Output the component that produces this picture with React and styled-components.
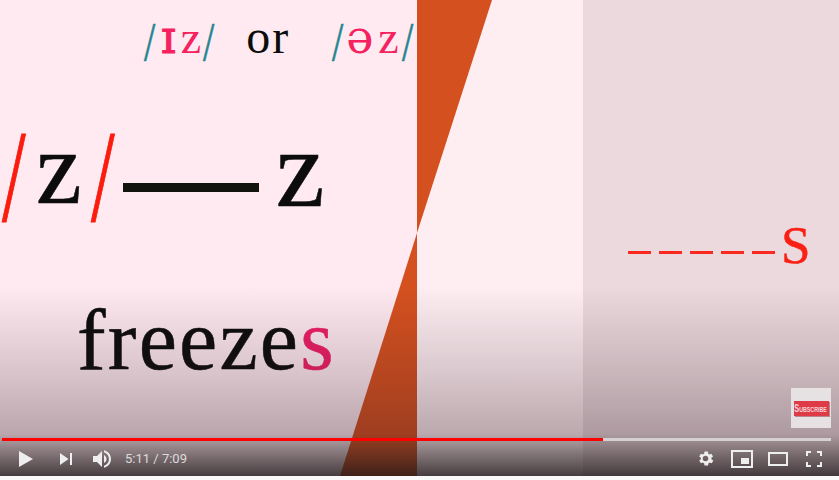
import styled, { createGlobalStyle } from "styled-components";

const Global = createGlobalStyle`
  html, body { margin: 0; padding: 0; background: #f9f9f9; overflow: hidden; }
`;

const Player = styled.div`
  position: relative;
  width: 839px;
  height: 476px;
  display: grid;
  grid-template-columns: 417px 166px 256px;
  overflow: hidden;
  font-family: "Liberation Serif", serif;
`;

const LeftPane = styled.div`
  background: #feeaf0;
  display: flex;
  flex-direction: column;
`;

const MiddlePane = styled.div`
  background: #feeef2;
`;

const RightPane = styled.div`
  background: #ebd9de;
  padding: 217px 0 0 45px;
`;

const Wedge = styled.svg`
  position: absolute;
  left: 0;
  top: 0;
`;

const Shade = styled.div`
  position: absolute;
  left: 0;
  right: 0;
  bottom: 0;
  height: 190px;
  background: linear-gradient(to bottom, rgba(48, 26, 34, 0) 0%, rgba(48, 26, 34, 0.2) 50%, rgba(48, 26, 34, 0.33) 78%, rgba(40, 30, 32, 0.55) 87%, rgba(30, 22, 24, 0.82) 100%);
`;

const IpaRow = styled.div`
  height: 85px;
  padding: 0 0 0 144px;
  font-size: 46px;
  line-height: 74px;
  white-space: nowrap;
`;

const Slash = styled.span`
  display: inline-block;
  font-size: ${(p) => p.$size}px;
  line-height: 1;
  color: ${(p) => p.$color};
  -webkit-text-stroke: ${(p) => p.$stroke}px ${(p) => p.$color};
  vertical-align: ${(p) => p.$drop}px;
  transform: scaleX(${(p) => p.$squeeze});
  transform-origin: left center;
  margin-left: ${(p) => p.$left || 0}px;
  width: ${(p) => p.$w}px;
`;

const IpaSound = styled.span`
  display: inline-block;
  color: #f5225f;
  font-family: ${(p) => (p.$phonetic ? '"DejaVu Serif", serif' : '"Liberation Serif", serif')};
  -webkit-text-stroke: ${(p) => p.$stroke || 0}px #f5225f;
  font-size: ${(p) => p.$size || 46}px;
  margin-left: ${(p) => p.$left || 0}px;
`;

const OrWord = styled.span`
  display: inline-block;
  color: #0c0c0c;
  font-size: 48px;
  letter-spacing: 2px;
  margin-left: ${(p) => p.$left}px;
`;

const RuleRow = styled.div`
  height: 160px;
  padding-left: 2px;
  font-size: 115px;
  line-height: 160px;
  color: #0c0c0c;
  white-space: nowrap;
`;

const Letter = styled.span`
  display: inline-block;
  font-size: ${(p) => p.$size}px;
  -webkit-text-stroke: 0.6px #0c0c0c;
  vertical-align: ${(p) => p.$drop || 0}px;
  margin-left: ${(p) => p.$left || 0}px;
`;

const RuleBar = styled.span`
  display: inline-block;
  width: 136px;
  height: 9px;
  margin-left: ${(p) => p.$left}px;
  background: #12130d;
  vertical-align: 11px;
`;

const Word = styled.div`
  margin-top: 45px;
  padding-left: 77px;
  font-size: 86px;
  letter-spacing: 2.2px;
  line-height: 100px;
  color: #0c0c0c;
  -webkit-text-stroke: 0.5px currentColor;
`;

const EndLetter = styled.span`
  color: #ee1e66;
`;

const DashedS = styled.div`
  display: flex;
  align-items: center;
  height: 70px;
`;

const Dash = styled.span`
  display: block;
  width: 23px;
  height: 3px;
  margin-right: 8px;
  background: #fb2a20;
`;

const BigS = styled.span`
  font-size: 53px;
  line-height: 70px;
  color: #fb2015;
  -webkit-text-stroke: 0.5px #fb2015;
  margin: 0 0 15px -2px;
`;

const SubscribeBox = styled.div`
  position: absolute;
  left: 791px;
  top: 388px;
  width: 40px;
  height: 40px;
  background: #e6e2e4;
  display: flex;
  align-items: center;
  justify-content: center;
`;

const SubscribeLabel = styled.span`
  display: flex;
  align-items: center;
  justify-content: center;
  width: 35px;
  height: 15px;
  background: #df3b47;
  box-shadow: 1px 1px 0 #b8868c;
  overflow: hidden;
`;

const SubscribeText = styled.span`
  display: inline-block;
  color: #f6d5d8;
  font-family: "Liberation Sans", sans-serif;
  font-size: 8px;
  font-weight: 700;
  white-space: nowrap;
  transform: scaleX(0.66);
  &::first-letter {
    font-size: 11px;
  }
`;

const Controls = styled.div`
  position: absolute;
  left: 2px;
  right: 8px;
  bottom: 0;
  height: 38px;
  display: flex;
  flex-direction: column;
`;

const Track = styled.div`
  height: 3px;
  background: #d5d1d2;
`;

const Played = styled.div`
  height: 3px;
  background: #fe0000;
`;

const ButtonRow = styled.div`
  flex: 1;
  display: flex;
  align-items: center;
  padding: 0 9px 0 16px;
  color: #eee;
`;

const Button = styled.span`
  display: flex;
  align-items: center;
  justify-content: center;
  width: ${(p) => p.$w}px;
  margin-right: ${(p) => p.$gap || 0}px;
  svg {
    flex-shrink: 0;
  }
`;

const Time = styled.span`
  font-family: Roboto, "Liberation Sans", sans-serif;
  font-size: 13px;
  color: #dcdcdc;
  margin-left: 13px;
`;

const Spacer = styled.div`
  flex: 1;
`;

const progress = (311 / 429) * 100;
const teal = "#1f8690";
const red = "#fb1c0e";

export default function App() {
  return (
    <>
      <Global />
      <Player>
        <LeftPane>
          <IpaRow>
            <Slash $size={54} $color={teal} $stroke={0.6} $drop={-7} $squeeze={0.75} $w={15}>/</Slash>
            <IpaSound $phonetic $stroke={1} $size={46} $left={2}>ɪ</IpaSound>
            <IpaSound $left={5}>z</IpaSound>
            <Slash $size={54} $color={teal} $stroke={0.6} $drop={-7} $squeeze={0.75} $w={15} $left={2}>/</Slash>
            <OrWord $left={28}>or</OrWord>
            <Slash $size={54} $color={teal} $stroke={0.6} $drop={-7} $squeeze={0.75} $w={13} $left={42}>/</Slash>
            <IpaSound $phonetic $size={46} $left={1}>ə</IpaSound>
            <IpaSound $left={5}>z</IpaSound>
            <Slash $size={54} $color={teal} $stroke={0.6} $drop={-7} $squeeze={0.75} $w={15} $left={3}>/</Slash>
          </IpaRow>
          <RuleRow>
            <Slash $size={131} $color={red} $stroke={1} $drop={-18} $squeeze={0.65} $w={24}>/</Slash>
            <Letter $size={103} $left={10}>z</Letter>
            <Slash $size={131} $color={red} $stroke={1} $drop={-18} $squeeze={0.65} $w={24} $left={9}>/</Slash>
            <RuleBar $left={8} />
            <Letter $size={110} $left={17} $drop={-3}>z</Letter>
          </RuleRow>
          <Word>
            freeze<EndLetter>s</EndLetter>
          </Word>
        </LeftPane>
        <MiddlePane />
        <RightPane>
          <DashedS>
            <Dash />
            <Dash />
            <Dash />
            <Dash />
            <Dash />
            <BigS>S</BigS>
          </DashedS>
        </RightPane>
        <Wedge width="839" height="476" viewBox="0 0 839 476">
          <polygon points="417,0 492,0 417,233" fill="#d5501f" />
          <polygon points="417,233 417,476 340,476" fill="#d5501f" />
        </Wedge>
        <Shade />
        <SubscribeBox>
          <SubscribeLabel>
            <SubscribeText>SUBSCRIBE</SubscribeText>
          </SubscribeLabel>
        </SubscribeBox>
        <Controls>
          <Track>
            <Played style={{ width: `${progress}%` }} />
          </Track>
          <ButtonRow>
            <Button $w={16} $gap={25}>
              <svg width="16" height="18" viewBox="0 0 16 18">
                <path d="M1 1 L15 9 L1 17 Z" fill="#eee" />
              </svg>
            </Button>
            <Button $w={14} $gap={19}>
              <svg width="14" height="14" viewBox="0 0 14 14">
                <path d="M1 1 L9.500 7 L1 13 Z M11 1 H13 V13 H11 Z" fill="#eee" />
              </svg>
            </Button>
            <Button $w={20}>
              <svg width="24" height="24" viewBox="0 0 24 24">
                <path fill="#eee" d="M3 9v6h4l5 5V4L7 9H3zm13.500 3c0-1.770-1.020-3.290-2.500-4.030v8.050c1.480-.73 2.500-2.250 2.500-4.020zM14 3.230v2.060c2.890.86 5 3.540 5 6.710s-2.110 5.850-5 6.710v2.060c4.010-.91 7-4.490 7-8.770s-2.990-7.860-7-8.770z" />
              </svg>
            </Button>
            <Time>5:11 / 7:09</Time>
            <Spacer />
            <Button $w={18} $gap={17}>
              <svg width="19" height="19" viewBox="0 0 24 24">
                <path fill="#eee" fillRule="evenodd" d="M19.400 13a7.500 7.500 0 0 0 0-2l2.100-1.600-2-3.500-2.500 1a7.500 7.500 0 0 0-1.700-1L15.300 3.300h-4.600l-.4 2.600a7.500 7.500 0 0 0-1.700 1l-2.500-1-2 3.500L6.200 11a7.500 7.500 0 0 0 0 2l-2.100 1.600 2 3.500 2.500-1a7.500 7.500 0 0 0 1.700 1l.4 2.600h4.600l.4-2.600a7.500 7.500 0 0 0 1.700-1l2.500 1 2-3.500zM12 15.500a3.500 3.500 0 1 1 0-7 3.500 3.500 0 0 1 0 7z" />
              </svg>
            </Button>
            <Button $w={22} $gap={15}>
              <svg width="22" height="18" viewBox="0 0 22 18">
                <path fill="none" stroke="#eee" strokeWidth="2" d="M1 1 H21 V17 H1 Z" />
                <rect x="10" y="8" width="8" height="6" fill="#eee" />
              </svg>
            </Button>
            <Button $w={20} $gap={18}>
              <svg width="20" height="14" viewBox="0 0 20 14">
                <path fill="none" stroke="#eee" strokeWidth="2" d="M1 1 H19 V13 H1 Z" />
              </svg>
            </Button>
            <Button $w={16}>
              <svg width="16" height="16" viewBox="0 0 16 16">
                <path fill="none" stroke="#eee" strokeWidth="2" d="M1 5 V1 H5 M11 1 H15 V5 M15 11 V15 H11 M5 15 H1 V11" />
              </svg>
            </Button>
          </ButtonRow>
        </Controls>
      </Player>
    </>
  );
}
